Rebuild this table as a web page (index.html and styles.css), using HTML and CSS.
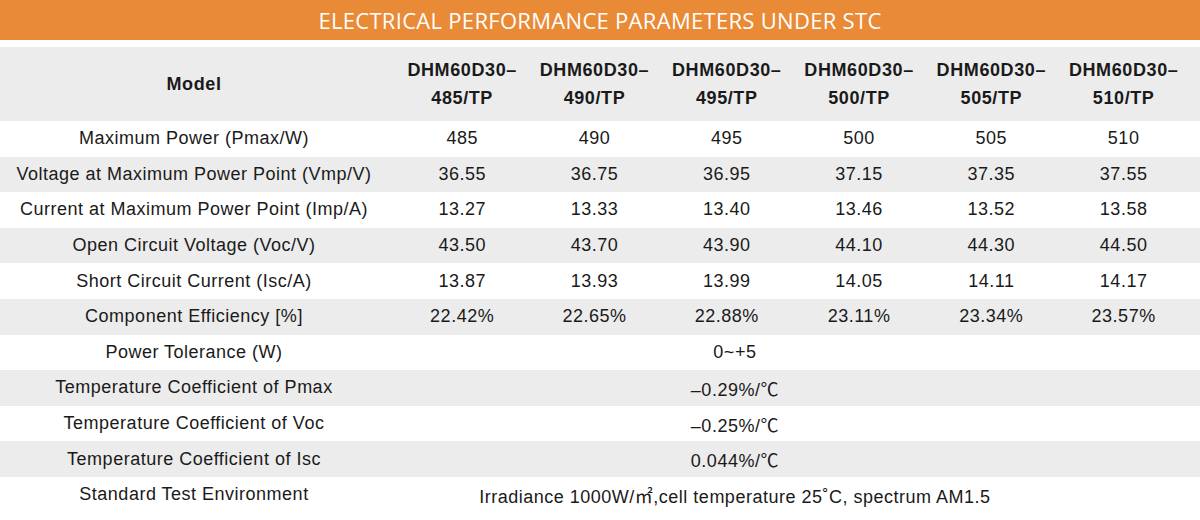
FILE: index.html
```html
<!DOCTYPE html>
<html lang="en">
<head>
<meta charset="utf-8">
<title>Electrical Performance Parameters under STC</title>
<link rel="stylesheet" href="styles.css">
</head>
<body>
<div class="banner">ELECTRICAL PERFORMANCE PARAMETERS UNDER STC</div>
<div class="table">
  <div class="row head">
    <div class="label">Model</div>
    <div class="cell">DHM60D30–<br>485/TP</div>
    <div class="cell">DHM60D30–<br>490/TP</div>
    <div class="cell">DHM60D30–<br>495/TP</div>
    <div class="cell">DHM60D30–<br>500/TP</div>
    <div class="cell">DHM60D30–<br>505/TP</div>
    <div class="cell">DHM60D30–<br>510/TP</div>
  </div>
  <div class="row">
    <div class="label">Maximum Power (Pmax/W)</div>
    <div class="cell">485</div><div class="cell">490</div><div class="cell">495</div><div class="cell">500</div><div class="cell">505</div><div class="cell">510</div>
  </div>
  <div class="row alt">
    <div class="label">Voltage at Maximum Power Point (Vmp/V)</div>
    <div class="cell">36.55</div><div class="cell">36.75</div><div class="cell">36.95</div><div class="cell">37.15</div><div class="cell">37.35</div><div class="cell">37.55</div>
  </div>
  <div class="row">
    <div class="label">Current at Maximum Power Point (Imp/A)</div>
    <div class="cell">13.27</div><div class="cell">13.33</div><div class="cell">13.40</div><div class="cell">13.46</div><div class="cell">13.52</div><div class="cell">13.58</div>
  </div>
  <div class="row alt">
    <div class="label">Open Circuit Voltage (Voc/V)</div>
    <div class="cell">43.50</div><div class="cell">43.70</div><div class="cell">43.90</div><div class="cell">44.10</div><div class="cell">44.30</div><div class="cell">44.50</div>
  </div>
  <div class="row">
    <div class="label">Short Circuit Current (Isc/A)</div>
    <div class="cell">13.87</div><div class="cell">13.93</div><div class="cell">13.99</div><div class="cell">14.05</div><div class="cell">14.11</div><div class="cell">14.17</div>
  </div>
  <div class="row alt">
    <div class="label">Component Efficiency [%]</div>
    <div class="cell">22.42%</div><div class="cell">22.65%</div><div class="cell">22.88%</div><div class="cell">23.11%</div><div class="cell">23.34%</div><div class="cell">23.57%</div>
  </div>
  <div class="row">
    <div class="label">Power Tolerance (W)</div>
    <div class="span">0~+5</div>
  </div>
  <div class="row alt">
    <div class="label">Temperature Coefficient of Pmax</div>
    <div class="span">–0.29%/℃</div>
  </div>
  <div class="row">
    <div class="label">Temperature Coefficient of Voc</div>
    <div class="span">–0.25%/℃</div>
  </div>
  <div class="row alt">
    <div class="label">Temperature Coefficient of Isc</div>
    <div class="span">0.044%/℃</div>
  </div>
  <div class="row">
    <div class="label">Standard Test Environment</div>
    <div class="span">Irradiance 1000W/㎡,cell temperature 25˚C, spectrum AM1.5</div>
  </div>
</div>
</body>
</html>
```
FILE: styles.css
```css
html, body {
  margin: 0;
  padding: 0;
  background: #ffffff;
}

body {
  width: 1200px;
  height: 520px;
  overflow: hidden;
  font-family: "Liberation Sans", Arial, "Noto Sans CJK SC", sans-serif;
  color: #1a1a1a;
}

.banner {
  height: 40px;
  background: #e98a36;
  color: #ffffff;
  font-family: "Open Sans", "Liberation Sans", sans-serif;
  font-size: 22px;
  line-height: 40px;
  text-align: center;
  letter-spacing: 0.3px;
}

.table {
  margin-top: 7px;
}

.row {
  display: grid;
  grid-template-columns: 396px repeat(6, 132.3px);
  height: 35.6px;
  align-items: center;
  font-size: 18px;
  letter-spacing: 0.5px;
}

.row.alt {
  background: #ececec;
}

.row.head {
  height: 74px;
  background: #ececec;
  font-weight: bold;
  line-height: 28px;
  letter-spacing: 0.6px;
}

.label {
  text-align: center;
  padding-right: 8px;
  white-space: nowrap;
}

.cell {
  text-align: center;
  white-space: nowrap;
}

.span {
  grid-column: 2 / 8;
  text-align: center;
  padding-right: 116px;
  white-space: nowrap;
}
```
